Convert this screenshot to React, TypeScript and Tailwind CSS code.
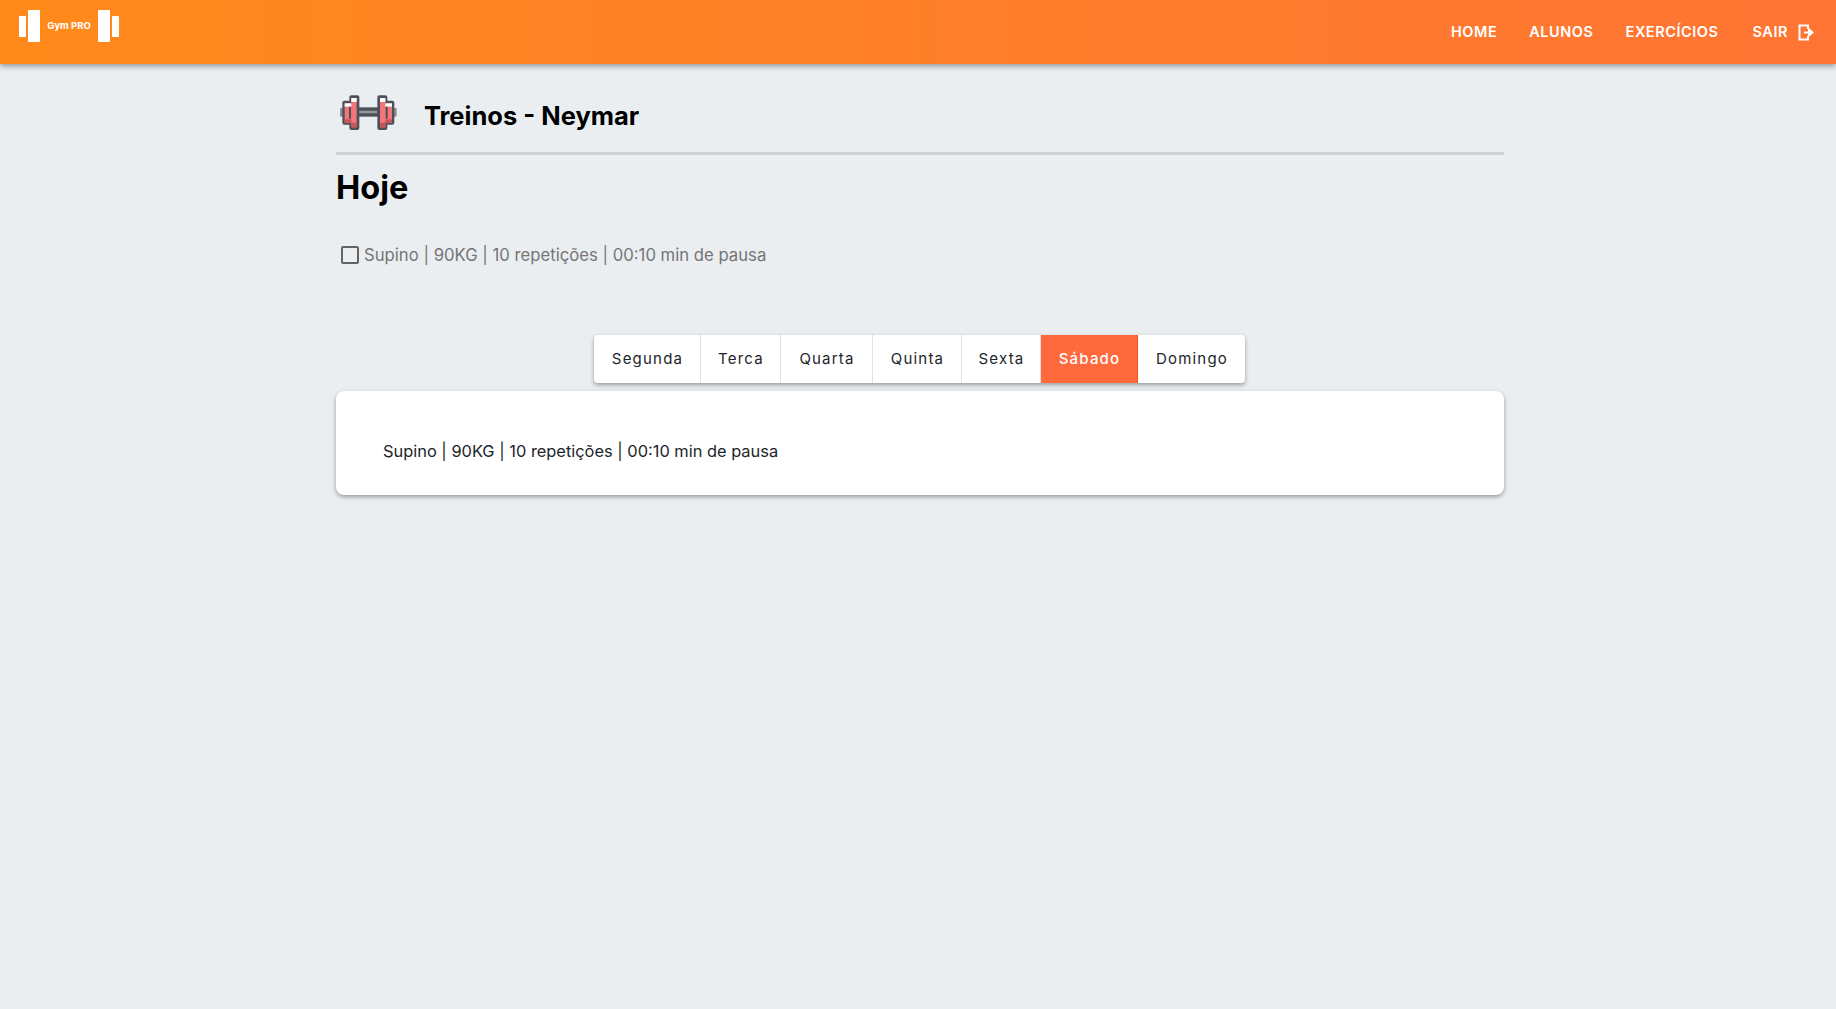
import React from "react";

const days = ["Segunda", "Terca", "Quarta", "Quinta", "Sexta", "Sábado", "Domingo"];
const dayWidths: Record<string, string> = {
  Segunda: "w-[107px]",
  Terca: "w-[80px]",
  Quarta: "w-[92px]",
  Quinta: "w-[89px]",
  Sexta: "w-[79px]",
  Sábado: "w-[97px]",
  Domingo: "w-[107px]",
};

const Logo = () => (
  <div className="flex items-center">
    <div className="flex items-center gap-[2px]">
      <div className="w-[7px] h-[21px] bg-white rounded-[1px]" />
      <div className="w-[12px] h-[32px] bg-white rounded-[1px]" />
    </div>
    <span className="w-[58px] text-center text-[9.5px] font-bold text-white">Gym PRO</span>
    <div className="flex items-center gap-[2px]">
      <div className="w-[12px] h-[32px] bg-white rounded-[1px]" />
      <div className="w-[7px] h-[21px] bg-white rounded-[1px]" />
    </div>
  </div>
);

// viewBox is 3x the icon size, easier to trace the plates
const Dumbbell = () => (
  <svg width="70" height="45" viewBox="0 0 210 135" className="block shrink-0">
    <rect x="15" y="54" width="12" height="26" rx="4" fill="#8a8e98" />
    <rect x="173" y="54" width="12" height="26" rx="4" fill="#8a8e98" />
    <rect x="70" y="52" width="60" height="28" fill="#4d5059" />
    <rect x="72" y="62" width="56" height="8" fill="#8f949e" />
    <path d="M22 38q0-6 6-6h15V22q0-6 6-6h18q6 0 6 6v92q0 6-6 6H49q-6 0-6-6v-10H28q-6 0-6-6z" fill="#4d5059" />
    <path d="M178 38q0-6-6-6h-15V22q0-6-6-6h-18q-6 0-6 6v92q0 6 6 6h18q6 0 6-6v-10h15q6 0 6-6z" fill="#4d5059" />
    <rect x="29" y="40" width="34" height="58" fill="#f2757a" />
    <rect x="49" y="24" width="16" height="88" fill="#f2757a" />
    <rect x="135" y="24" width="16" height="88" fill="#f2757a" />
    <rect x="137" y="40" width="34" height="58" fill="#f2757a" />
    <rect x="29" y="40" width="20" height="10" fill="#ffffff" />
    <rect x="49" y="24" width="16" height="12" fill="#ffffff" />
    <rect x="135" y="24" width="16" height="12" fill="#ffffff" />
    <rect x="151" y="40" width="20" height="10" fill="#ffffff" />
    <rect x="29" y="88" width="20" height="10" fill="#c9555a" />
    <rect x="49" y="98" width="16" height="14" fill="#c9555a" />
    <rect x="135" y="98" width="16" height="14" fill="#c9555a" />
    <rect x="151" y="88" width="20" height="10" fill="#c9555a" />
    <rect x="42" y="50" width="6" height="36" fill="#4d5059" />
    <rect x="152" y="50" width="6" height="36" fill="#4d5059" />
  </svg>
);

export default function App() {
  return (
    <div className="min-h-[1009px] bg-[#eaeef1] font-['Inter','Liberation_Sans',sans-serif]">
      <header className="h-16 flex items-center justify-between pl-[19px] pr-[22px] bg-gradient-to-r from-[#ff8a1a] to-[#ff7433] shadow-[0_2px_6px_rgba(0,0,0,0.4)]">
        <div className="-mt-[12px]">
          <Logo />
        </div>
        <nav className="flex items-center text-white text-[14.5px] font-semibold tracking-[0.55px]">
          <a className="mr-[32px]">HOME</a>
          <a className="mr-[32px]">ALUNOS</a>
          <a className="mr-[34px]">EXERCÍCIOS</a>
          <a className="flex items-center gap-[10px]">
            SAIR
            <svg width="16" height="17" viewBox="0 0 16 17" fill="none" stroke="white" strokeWidth="2">
              <path d="M10 5V1.5H1.5v14H10V12" />
              <path d="M6 8.5h5V5.5l3.5 3-3.5 3v-3" fill="white" />
            </svg>
          </a>
        </nav>
      </header>

      <main className="w-[1168px] ml-[336px]">
        <div className="flex items-start h-[91px] border-b-[3px] border-[#ced1d5]">
          <div className="ml-[-1px] mt-[26px]">
            <Dumbbell />
          </div>
          <h2 className="ml-[19px] mt-[36px] text-[25.5px] leading-[32px] font-bold text-black">Treinos - Neymar</h2>
        </div>
        <h1 className="mt-[13px] text-[32.5px] leading-[40px] font-bold text-black">Hoje</h1>

        <label className="mt-[34px] flex items-center text-[16.7px] leading-[26px] text-[#757575]">
          <span className="ml-[5px] mr-[5px] w-[18px] h-[18px] shrink-0 border-2 border-[#636363] rounded-[2px]" />
          Supino | 90KG | 10 repetições | 00:10 min de pausa
        </label>

        <div className="mt-[67px] pr-[2px] flex justify-center">
          <div className="flex h-[48px] bg-white rounded-[4px] overflow-hidden shadow-[0_2px_4px_rgba(0,0,0,0.35)]">
            {days.map((day) => (
              <button
                key={day}
                className={`${dayWidths[day]} pl-[2px] pt-[1px] text-[15px] tracking-[1.2px] border-r last:border-r-0 ${
                  day === "Sábado"
                    ? "bg-[#ff6a3d] text-white font-medium border-[#f4511e]"
                    : "text-[#212529] border-[#dee2e6]"
                }`}
              >
                {day}
              </button>
            ))}
          </div>
        </div>

        <section className="mt-[8px] h-[104px] bg-white rounded-[8px] pl-[47px] pt-[47px] text-[16.4px] leading-[26px] text-[#212529] shadow-[0_2px_4px_rgba(0,0,0,0.35)]">
          Supino | 90KG | 10 repetições | 00:10 min de pausa
        </section>
      </main>
    </div>
  );
}
